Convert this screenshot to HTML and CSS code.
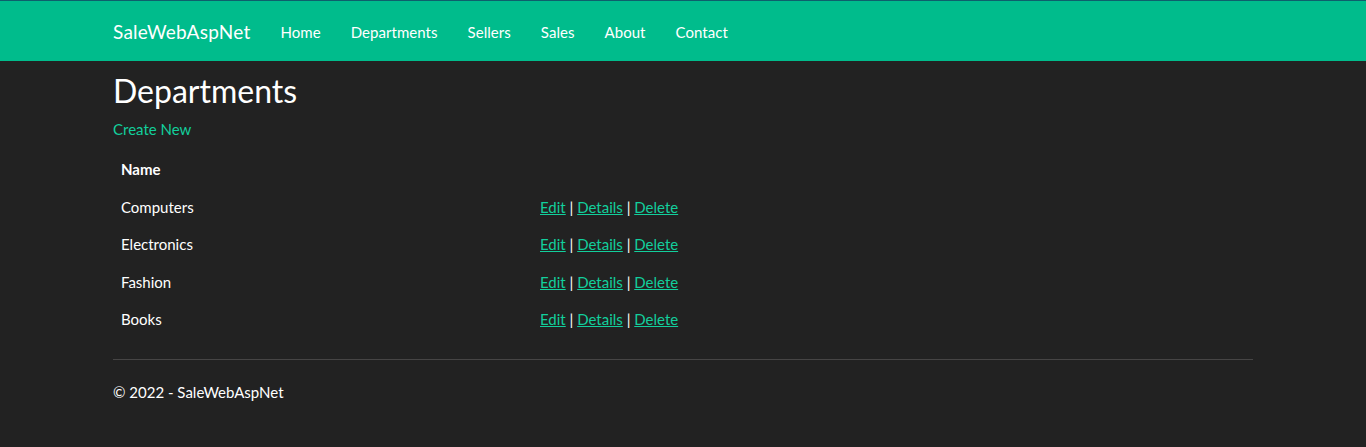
FILE: index.html
```html
<!DOCTYPE html>
<html lang="en">
<head>
<meta charset="utf-8">
<title>Departments - SaleWebAspNet</title>
<link rel="stylesheet" href="styles.css">
</head>
<body>
<nav class="navbar">
  <div class="container nav-inner">
    <a class="brand" href="#">SaleWebAspNet</a>
    <ul class="nav-links">
      <li><a href="#">Home</a></li>
      <li><a href="#">Departments</a></li>
      <li><a href="#">Sellers</a></li>
      <li><a href="#">Sales</a></li>
      <li><a href="#">About</a></li>
      <li><a href="#">Contact</a></li>
    </ul>
  </div>
</nav>
<main class="container body-content">
  <h2 class="title">Departments</h2>
  <p class="create"><a href="#">Create New</a></p>
  <table class="table">
    <thead>
      <tr><th class="col-name">Name</th><th></th></tr>
    </thead>
    <tbody>
      <tr><td>Computers</td><td><a class="ul" href="#">Edit</a> | <a class="ul" href="#">Details</a> | <a class="ul" href="#">Delete</a></td></tr>
      <tr><td>Electronics</td><td><a class="ul" href="#">Edit</a> | <a class="ul" href="#">Details</a> | <a class="ul" href="#">Delete</a></td></tr>
      <tr><td>Fashion</td><td><a class="ul" href="#">Edit</a> | <a class="ul" href="#">Details</a> | <a class="ul" href="#">Delete</a></td></tr>
      <tr><td>Books</td><td><a class="ul" href="#">Edit</a> | <a class="ul" href="#">Details</a> | <a class="ul" href="#">Delete</a></td></tr>
    </tbody>
  </table>
  <hr class="rule">
  <footer class="footer">
    <p>&copy; 2022 - SaleWebAspNet</p>
  </footer>
</main>
</body>
</html>
```

FILE: styles.css
```css
* { box-sizing: border-box; }
html, body { margin: 0; padding: 0; }
body {
  background: #222222;
  color: #ffffff;
  font-family: Lato, "Open Sans", "Liberation Sans", sans-serif;
  font-size: 15px;
  line-height: 1.428571;
}
a { color: #12cf9c; text-decoration: none; }
a.ul { text-decoration: underline; }

.container {
  width: 1170px;
  margin: 0 auto;
  padding: 0 15px;
}

.navbar {
  background: #00bc8c;
  border-top: 1px solid #0e5f6c;
  height: 61px;
}
.nav-inner {
  display: flex;
  align-items: stretch;
  height: 60px;
}
.brand {
  color: #ffffff;
  font-size: 19px;
  letter-spacing: 0.23px;
  line-height: 20px;
  padding: 21px 15px 19px 0;
}
.nav-links {
  display: flex;
  list-style: none;
  margin: 0;
  padding: 0;
}
.nav-links a {
  display: block;
  color: #ffffff;
  line-height: 20px;
  padding: 21px 15px 19px;
  letter-spacing: 0.05px;
}

.title {
  font-size: 32px;
  font-weight: 400;
  line-height: 1.1;
  margin: 12px 0 10.5px;
}
.create { margin: 0 0 10.5px; }

.table {
  width: 100%;
  border-collapse: collapse;
  margin-bottom: 20px;
}
.table th, .table td {
  padding: 8px;
  text-align: left;
  vertical-align: top;
  line-height: 1.428571;
}
.table th {
  font-weight: 700;
  border-bottom: 1px solid transparent;
}
.col-name { width: 419px; }

.rule {
  border: 0;
  border-top: 1px solid #464545;
  margin: 20px 0 22px;
  height: 0;
}
.footer p { margin: 0 0 10.5px; }
```
